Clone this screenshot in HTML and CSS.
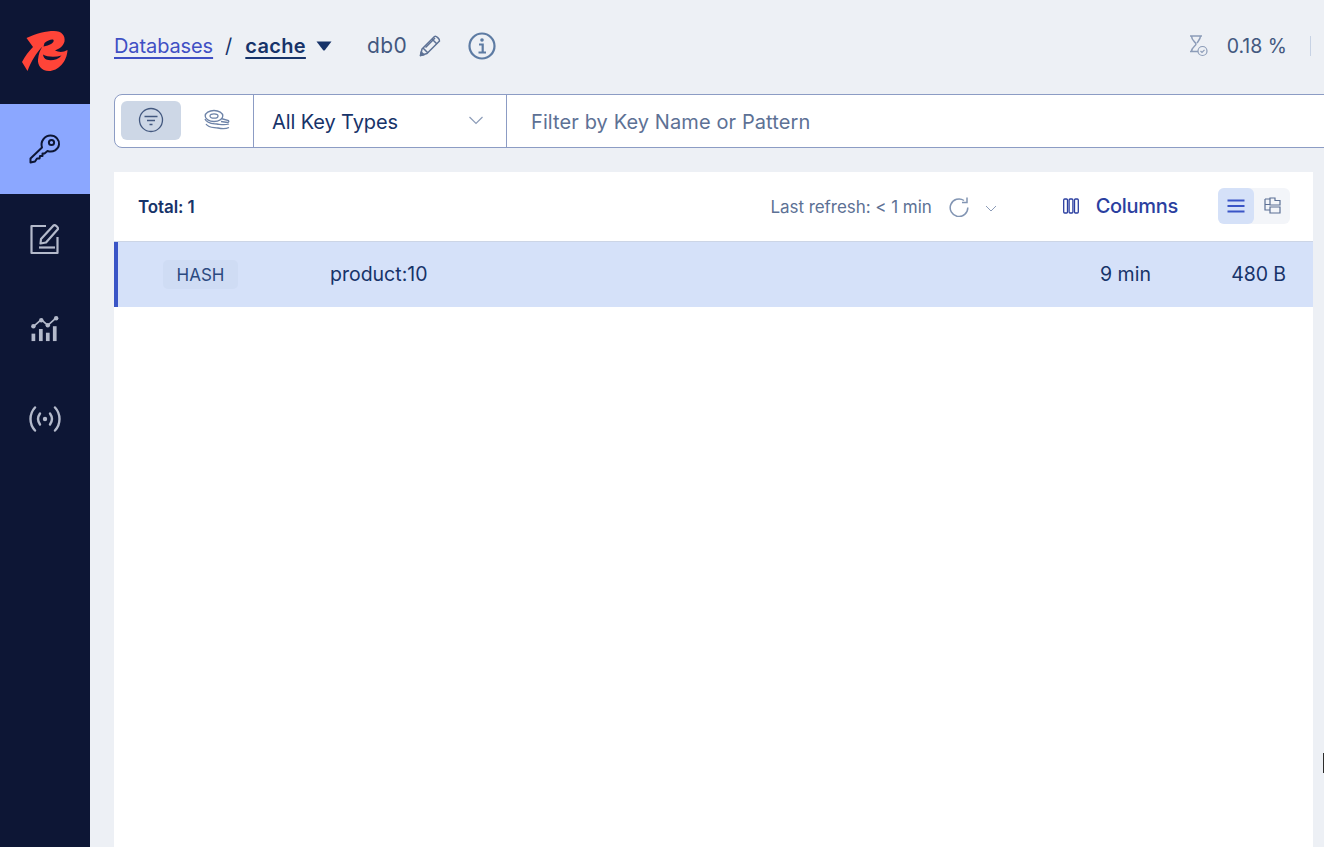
FILE: index.html
```html
<!DOCTYPE html>
<html lang="en">
<head>
<meta charset="utf-8">
<title>Redis Insight</title>
<link rel="stylesheet" href="styles.css">
</head>
<body>
<nav class="sidebar">
  <div class="logo">
    <svg width="46" height="42" viewBox="0 0 46 42"><path fill="#ff4438" d="M4.500 8 C14 3.500 24 1 32 1 C40 1 43.500 6 42.500 11.500 C41.500 16 37 19 33 20.500 C37 22.500 41 22.500 45.500 20 C45 32 36 41 27 41 C19 41 15.500 35 16 29.500 C16.500 24 18 20 20.500 16.500 C14 23 9.500 31 5.500 41 L0 32 C3 26 7 21 11 17 Z"/><path fill="#0d1635" d="M22.500 13 C25.500 10.500 29 9 31 9.500 C32.500 10.500 31.500 12.500 29 14 C27 15.200 24.500 16 21.500 16.500 Z"/><path fill="#0d1635" d="M21 24.500 C25 27 33 27.500 39.500 25.500 C36 30 29 31 25 29.800 C22.500 29 21.300 27 21 24.500 Z"/></svg>
  </div>
  <a class="nav-item active">
    <svg width="34" height="34" viewBox="0 0 34 34" fill="none" stroke="#0d1635" stroke-width="2" stroke-linejoin="round"><path d="M14 15.500 C12 9 17 3.500 22.500 3.500 C28 3.500 31.500 8 31 12.500 C30.500 17.500 25 21 19.500 19 L16.500 21.500 L14.500 21.500 L14.500 24 L12 24 L11.500 26.500 L9 26.500 L7 29.500 L2.500 30.500 L2.500 26.500 Z"/><circle cx="23.500" cy="10.500" r="2.600"/></svg>
  </a>
  <a class="nav-item">
    <svg width="32" height="32" viewBox="0 0 32 32" fill="none" stroke="#b4bacb" stroke-width="2.200" stroke-linejoin="round"><path d="M17 3 H2.500 V30 H28.500 V14"/><path d="M12 16 L24.500 2.500 C26 1.500 29.500 4 29 6 L17 19.500 L11.500 20.500 Z"/><path d="M10 24.500 H26"/></svg>
  </a>
  <a class="nav-item">
    <svg class="chart" width="30" height="26" viewBox="0 0 32 28" fill="none"><path stroke="#b4bacb" stroke-width="1.800" d="M4 11 L12 4 L19 10 L28 2"/><g fill="#b4bacb"><circle cx="3.500" cy="11" r="2.400"/><circle cx="12" cy="4.500" r="2.400"/><circle cx="19" cy="10" r="2.400"/><circle cx="28" cy="2.500" r="2.400"/><rect x="1.500" y="19" width="4" height="8"/><rect x="9.500" y="14" width="4" height="13"/><rect x="17" y="18" width="4" height="9"/><rect x="24.500" y="11" width="4" height="16"/></g></svg>
  </a>
  <a class="nav-item">
    <svg width="32" height="26" viewBox="0 0 32 26" fill="none" stroke="#b4bacb" stroke-width="2.400" stroke-linecap="round"><path d="M6 1.500 C0 8 0 18 6 24.500"/><path d="M26 1.500 C32 8 32 18 26 24.500"/><path d="M11 7.500 C8.500 11 8.500 15 11 18.500"/><path d="M21 7.500 C23.500 11 23.500 15 21 18.500"/><circle cx="16" cy="13" r="2.200" fill="#b4bacb" stroke="none"/></svg>
  </a>
</nav>
<main class="main">
  <header class="topbar">
    <div class="crumbs">
      <a class="crumb-link">Databases</a>
      <span class="crumb-sep">/</span>
      <a class="crumb-current">cache</a>
      <svg class="caret" width="16" height="10" viewBox="0 0 16 10"><path fill="#173369" d="M0.500 0.500 H15.500 L9 9 Q8 10 7 9 Z"/></svg>
      <span class="db-name">db0</span>
      <svg class="pencil" width="24" height="24" viewBox="0 0 24 24" fill="none" stroke="#5d7195" stroke-width="1.500" stroke-linejoin="round"><path d="M2.500 21.500 L4 15 L16.500 2.500 C18 1.500 22 5 21.500 7 L9 19.500 Z"/><path d="M5 14 L10 19 M14 5 L19 10 M7.500 13.500 L17 4"/><path fill="#5d7195" d="M2.500 21.500 L3.200 18 L6 20.800 Z"/></svg>
      <svg class="info" width="28" height="28" viewBox="0 0 28 28" fill="none" stroke="#5d7ba3" stroke-width="2.200"><circle cx="14" cy="14" r="12.500"/><path d="M11 12.500 H14.700 V20.500 M10.500 20.500 H18"/><circle cx="14" cy="8" r="1.800" fill="#5d7ba3" stroke="none"/></svg>
    </div>
    <div class="stats">
      <svg width="20" height="22" viewBox="0 0 20 22" fill="none" stroke="#8c9cb8" stroke-width="1.500"><path d="M1 1 H13 M1 16.500 H9 M2.500 1 C2.500 6 7 7 7 9 C7 11 2.500 12 2.500 16.500 M11.500 1 C11.500 4 9 6.500 8 8"/><circle cx="13.500" cy="16" r="4.500" stroke-width="1.200"/><path d="M11.500 16 L13 17.500 L15.500 14.800" stroke-width="1.200"/></svg>
      <span class="stat-value">0.18 %</span>
      <span class="stat-divider"></span>
    </div>
  </header>

  <section class="filterbar">
    <div class="modes">
      <span class="mode selected">
        <svg width="26" height="26" viewBox="0 0 26 26" fill="none" stroke="#43587f" stroke-width="1.300"><circle cx="13" cy="13" r="11.500"/><path d="M6.500 9.500 H19.500 M9 13.500 H17 M11.500 17.500 H14.500"/></svg>
      </span>
      <span class="mode">
        <svg width="26" height="22" viewBox="0 0 26 22" fill="none" stroke="#6d83a8" stroke-width="1.300"><ellipse cx="10" cy="7" rx="8.800" ry="5.500"/><ellipse cx="10" cy="7" rx="4" ry="2.200"/><path d="M17 9.500 L24.500 11.500 Q25.500 13 23.500 13.500 L17 12.500 M1 10 C3 15 9 14.500 13 15 C17 15.500 20 16.500 25 15 M2 15 C5 19.500 10 18 14 19 C18 20 21 20.500 25 18.500"/></svg>
      </span>
    </div>
    <div class="type-select">
      <span>All Key Types</span>
      <svg width="16" height="9" viewBox="0 0 16 9" fill="none" stroke="#8c9cb8" stroke-width="1.200"><path d="M1.500 1 L8 7.500 L14.500 1"/></svg>
    </div>
    <div class="search">Filter by Key Name or Pattern</div>
  </section>

  <section class="card">
    <div class="card-head">
      <strong class="total">Total: 1</strong>
      <div class="refresh">
        <span class="refresh-text">Last refresh: &lt; 1 min</span>
        <svg class="refresh-icon" width="20" height="20" viewBox="0 0 20 20" fill="none" stroke="#8295b3" stroke-width="1.500"><path d="M15 3.500 A8.800 8.800 0 1 0 18.800 10.500"/><path d="M18 0.500 V5.500 H13"/></svg>
        <svg class="refresh-caret" width="12" height="7" viewBox="0 0 12 7" fill="none" stroke="#8c9cb8" stroke-width="1"><path d="M1 1 L6 6 L11 1"/></svg>
      </div>
      <div class="columns">
        <svg width="16" height="16" viewBox="0 0 16 16" fill="none" stroke="#2b3fa0" stroke-width="1.300"><rect x="0.700" y="1" width="3.800" height="14" rx="1"/><rect x="6.100" y="1" width="3.800" height="14" rx="1"/><rect x="11.500" y="1" width="3.800" height="14" rx="1"/></svg>
        <span>Columns</span>
      </div>
      <div class="view-toggle">
        <span class="view on">
          <svg width="18" height="14" viewBox="0 0 18 14" fill="none" stroke="#3a55c6" stroke-width="2"><path d="M0.500 1.500 H17.500 M0.500 7 H17.500 M0.500 12.500 H17.500"/></svg>
        </span>
        <span class="view">
          <svg width="17" height="17" viewBox="0 0 17 17" fill="none" stroke="#5d7195" stroke-width="1.200"><path d="M1 2 V13 H6 M1 7.500 H6"/><path d="M1 2 H6 M6 1 H11 V3.500 H16 V8 H6 Z M6 10 H16 V16 H6 Z"/></svg>
        </span>
      </div>
    </div>
    <div class="key-row">
      <div class="type-cell"><span class="badge">HASH</span></div>
      <div class="key-name">product:10</div>
      <div class="ttl">9 min</div>
      <div class="size">480 B</div>
    </div>
  </section>
  <span class="cursor-sliver"></span>
</main>
</body>
</html>
```

FILE: styles.css
```css
* { box-sizing: border-box; }
html, body { margin: 0; height: 100%; overflow: hidden; }
body {
  display: flex;
  background: #edf0f5;
  font-family: Inter, "Liberation Sans", sans-serif;
  color: #173369;
}
svg { display: block; flex: none; }

.sidebar { width: 90px; flex: none; background: #0d1635; display: flex; flex-direction: column; }
.logo { height: 104px; display: flex; align-items: center; justify-content: center; padding-bottom: 2px; }
.nav-item { height: 90px; display: flex; align-items: center; justify-content: center; }
.nav-item.active { background: #8ba7ff; }

.main { flex: 1; min-width: 0; position: relative; padding-left: 24px; overflow: hidden; display: flex; flex-direction: column; }

.topbar { height: 94px; flex: none; display: flex; align-items: flex-start; justify-content: space-between; padding-top: 30px; }
.crumbs { display: flex; align-items: center; height: 31px; }
.crumb-link { font-size: 20px; letter-spacing: -0.1px; color: #3f4fc4; text-decoration: underline; text-underline-offset: 4px; text-decoration-thickness: 1.500px; }
.crumb-sep { font-size: 20px; margin: 0 13px 0 12px; color: #173369; }
.crumb-current { font-size: 20px; font-weight: 600; letter-spacing: 0.3px; color: #173369; text-decoration: underline; text-underline-offset: 4px; text-decoration-thickness: 1.500px; }
.caret { margin: 1px 0 0 10px; }
.db-name { font-size: 21px; letter-spacing: 0.5px; color: #43587f; margin-left: 35px; }
.pencil { margin-left: 11px; }
.info { margin-left: 26px; }

.stats { display: flex; align-items: center; height: 31px; }
.stat-value { font-size: 19.500px; color: #43587f; margin-left: 18px; }
.stat-divider { width: 1px; height: 20px; background: #c7d2e4; margin: 0 13px 0 23px; }

.filterbar { height: 54px; flex: none; display: flex; margin-right: -40px; background: #fff; border: 1px solid #8c9cc4; border-radius: 8px 0 0 8px; }
.modes { width: 139px; flex: none; display: flex; align-items: center; padding-left: 6px; padding-bottom: 2px; border-right: 1px solid #8c9cc4; }
.mode { width: 60px; height: 39px; display: flex; align-items: center; justify-content: center; border-radius: 6px; margin-top: 1px; }
.mode svg { margin-top: -1px; }
.mode.selected { background: #cdd7e6; }
.mode:last-child { margin-left: 6px; }
.type-select { width: 253px; flex: none; display: flex; align-items: center; justify-content: space-between; padding: 2px 22px 0 18px; border-right: 1px solid #8c9cc4; font-size: 20px; letter-spacing: -0.1px; }
.type-select svg { margin-top: -3px; }
.search { flex: 1; display: flex; align-items: center; padding: 2px 0 0 24px; font-size: 20px; letter-spacing: 0.1px; color: #5d7195; }

.card { flex: 1; margin: 24px 11px 0 0; background: #fff; min-height: 0; }
.card-head { height: 70px; display: flex; align-items: center; padding: 0 23px 0 24px; border-bottom: 1px solid #ccd5e6; }
.total { font-size: 17px; font-weight: 600; color: #173369; letter-spacing: -0.1px; }
.refresh { margin-left: auto; display: flex; align-items: center; }
.refresh-text { font-size: 17px; color: #5d7195; letter-spacing: -0.05px; }
.refresh-icon { margin-left: 17px; }
.refresh-caret { margin: 3px 0 0 16px; }
.columns { display: flex; align-items: center; margin: -2px 0 0 66px; font-size: 20px; font-weight: 500; letter-spacing: -0.3px; color: #2b3fa0; }
.columns span { margin-left: 17px; }
.view-toggle { display: flex; margin: -2px 0 0 40px; background: #f3f5f9; border-radius: 6px; }
.view { width: 36px; height: 36px; display: flex; align-items: center; justify-content: center; border-radius: 6px; }
.view.on { background: #d5e1f8; }

.key-row { height: 65px; display: flex; align-items: center; background: #d5e1f9; border-left: 4px solid #3a55c6; font-size: 19.500px; color: #173369; }
.key-row > div { margin-top: -2px; }
.key-row > .type-cell { margin-top: 0; }
.type-cell { width: 212px; flex: none; padding-left: 45px; }
.badge { display: inline-block; height: 29px; width: 75px; line-height: 31px; text-align: center; border-radius: 5px; background: #cfdcf4; font-size: 17px; color: #2b4a80; }
.key-name { flex: 1; }
.ttl { width: 130px; }
.size { width: 56px; margin-right: 27px; text-align: right; white-space: nowrap; letter-spacing: -0.1px; }

.cursor-sliver { position: absolute; right: 0; top: 753px; width: 1px; height: 20px; background: #2c2c2c; }
```
